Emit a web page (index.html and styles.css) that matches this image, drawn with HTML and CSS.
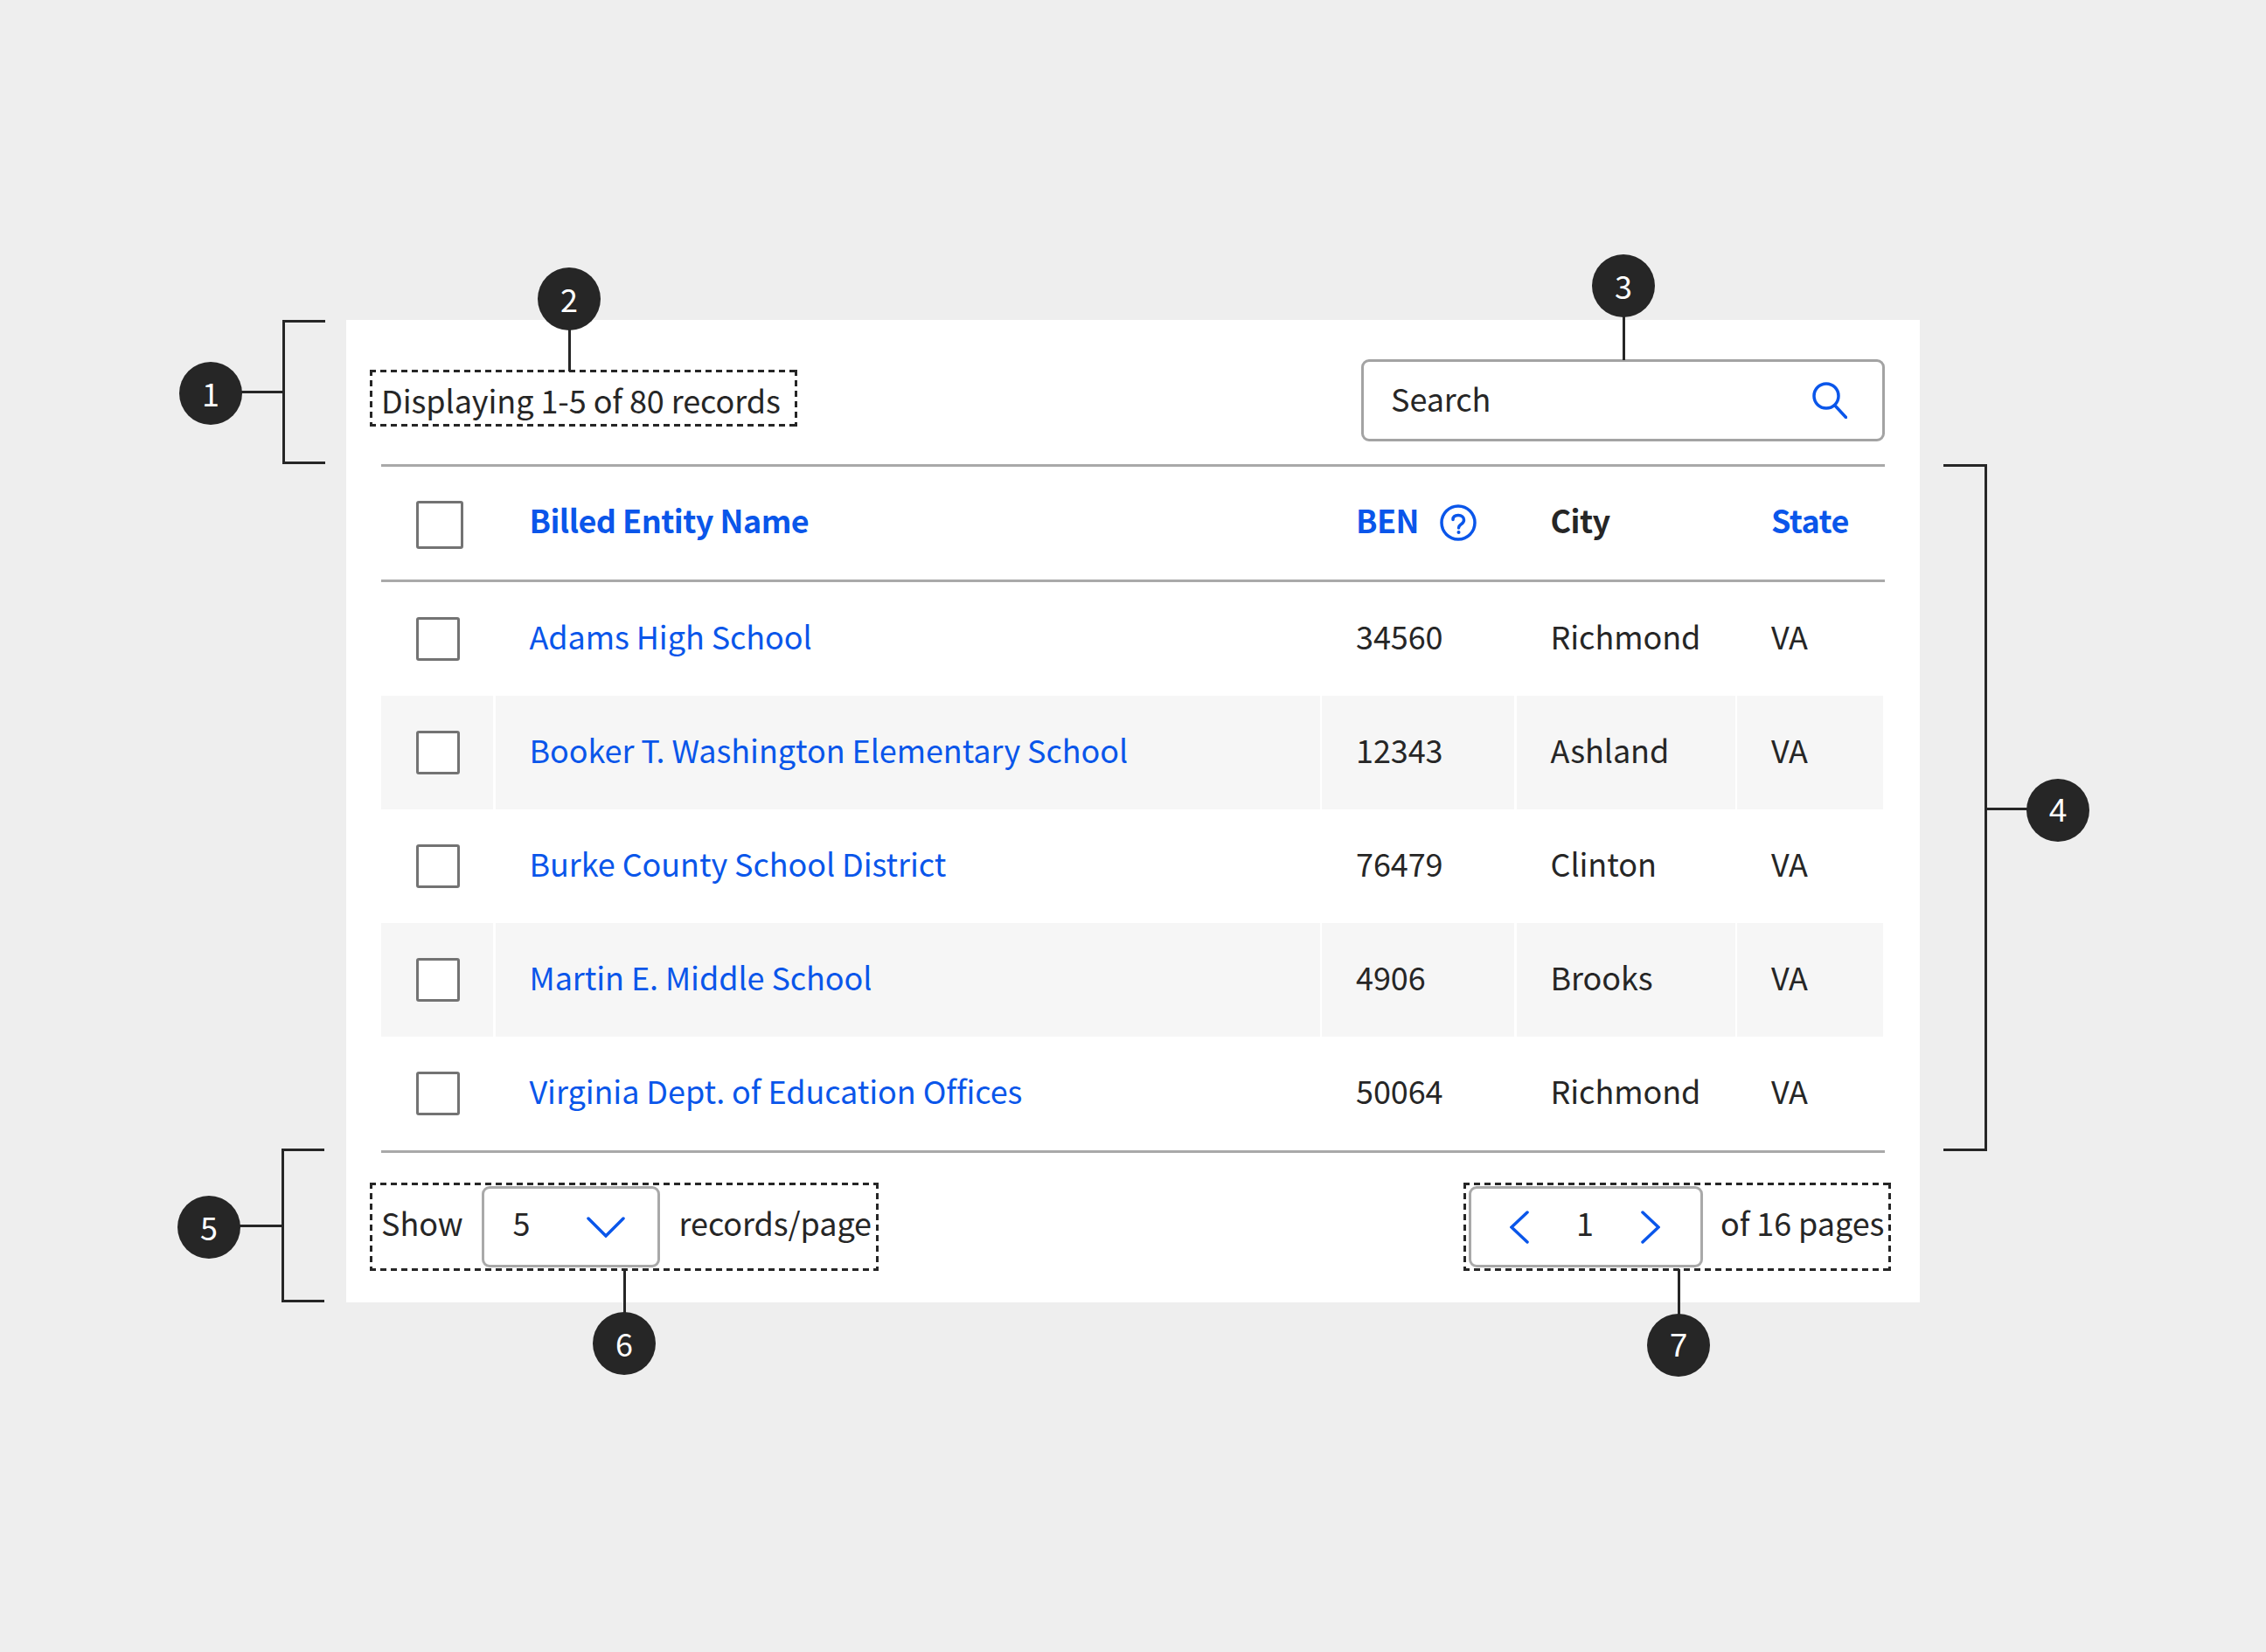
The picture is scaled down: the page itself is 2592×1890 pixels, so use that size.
FILE: index.html
```html
<!DOCTYPE html>
<html lang="en">
<head>
<meta charset="utf-8">
<title>Data table anatomy</title>
<link rel="stylesheet" href="styles.css">
</head>
<body>
<main class="stage">
  <section class="card">
    <header class="toolbar">
      <div class="dashed count">Displaying 1-5 of 80 records</div>
      <div class="search">
        <span class="search-label">Search</span>
        <svg class="search-icon" viewBox="0 0 40 42" fill="none"><circle cx="16" cy="16" r="14"/><path d="M26 27 38.500 40.500"/></svg>
      </div>
    </header>
    <div class="table">
      <div class="row head">
        <div class="cell"><span class="check large"></span></div>
        <div class="cell link strong">Billed Entity Name</div>
        <div class="cell link strong">BEN
          <svg class="help" viewBox="0 0 42 42" fill="none"><circle cx="21" cy="21" r="19"/><path d="M15 17.500C15 14 17.500 12.500 21 12.500C25 12.500 27.500 15 27.500 18C27.500 21 25.500 22 23.500 23.500C22 24.500 21.500 25.500 21.500 27"/><circle class="help-dot" cx="21.500" cy="32" r="2"/></svg>
        </div>
        <div class="cell strong">City</div>
        <div class="cell link strong">State</div>
      </div>
      <div class="row">
        <div class="cell"><span class="check"></span></div>
        <div class="cell link">Adams High School</div>
        <div class="cell">34560</div><div class="cell">Richmond</div><div class="cell">VA</div>
      </div>
      <div class="row band">
        <div class="cell"><span class="check"></span></div>
        <div class="cell link">Booker T. Washington Elementary School</div>
        <div class="cell">12343</div><div class="cell">Ashland</div><div class="cell">VA</div>
      </div>
      <div class="row">
        <div class="cell"><span class="check"></span></div>
        <div class="cell link">Burke County School District</div>
        <div class="cell">76479</div><div class="cell">Clinton</div><div class="cell">VA</div>
      </div>
      <div class="row band">
        <div class="cell"><span class="check"></span></div>
        <div class="cell link">Martin E. Middle School</div>
        <div class="cell">4906</div><div class="cell">Brooks</div><div class="cell">VA</div>
      </div>
      <div class="row">
        <div class="cell"><span class="check"></span></div>
        <div class="cell link">Virginia Dept. of Education Offices</div>
        <div class="cell">50064</div><div class="cell">Richmond</div><div class="cell">VA</div>
      </div>
    </div>
    <footer class="pager">
      <div class="dashed page-size">
        <span class="t">Show</span>
        <div class="box select">
          <span class="t">5</span>
          <svg class="chev-down" viewBox="0 0 44 24" fill="none"><path d="M2 2 22 22 42 2"/></svg>
        </div>
        <span class="t">records/page</span>
      </div>
      <div class="dashed page-nav">
        <div class="box stepper">
          <svg class="chev-side" viewBox="0 0 22 38" fill="none"><path d="M20 2 2 19 20 36"/></svg>
          <span class="t">1</span>
          <svg class="chev-side" viewBox="0 0 22 38" fill="none"><path d="M2 2 20 19 2 36"/></svg>
        </div>
        <span class="t">of 16 pages</span>
      </div>
    </footer>
  </section>

  <div class="bracket left b-toolbar"></div>
  <div class="bracket right b-table"></div>
  <div class="bracket left b-footer"></div>
  <div class="wire h w1"></div>
  <div class="wire v w2"></div>
  <div class="wire v w3"></div>
  <div class="wire h w4"></div>
  <div class="wire h w5"></div>
  <div class="wire v w6"></div>
  <div class="wire v w7"></div>
  <div class="badge n1">1</div>
  <div class="badge n2">2</div>
  <div class="badge n3">3</div>
  <div class="badge n4">4</div>
  <div class="badge n5">5</div>
  <div class="badge n6">6</div>
  <div class="badge n7">7</div>
</main>
</body>
</html>
```
FILE: styles.css
```css
* { box-sizing: border-box; }
html, body { margin: 0; height: 1890px; overflow: hidden; }
body {
  background: #eeeeee;
  color: #262626;
  font-family: "Noto Sans CJK SC", "Source Sans Pro", "Noto Sans", sans-serif;
  font-size: 36px;
  line-height: 44px;
  letter-spacing: -0.08px;
}
.stage { position: relative; width: 2592px; height: 1890px; padding: 366px 0 0 396px; }
.card { width: 1800px; height: 1124px; background: #fff; display: flex; flex-direction: column; }

.toolbar { height: 165px; padding: 45px 40px 0 27px; display: flex; justify-content: space-between; align-items: flex-start; }
.dashed {
  border: 3px solid transparent;
  display: flex;
  align-items: center;
  flex: none;
  white-space: nowrap;
  background-origin: border-box;
  background-repeat: no-repeat;
  background-image:
    repeating-linear-gradient(90deg, #262626 0 7px, transparent 7px 12px),
    repeating-linear-gradient(90deg, #262626 0 7px, transparent 7px 12px),
    repeating-linear-gradient(180deg, #262626 0 7px, transparent 7px 12px),
    repeating-linear-gradient(180deg, #262626 0 7px, transparent 7px 12px);
  background-size: 100% 3px, 100% 3px, 3px 100%, 3px 100%;
  background-position: left top, left bottom, left top, right top;
}
.count { margin-top: 12px; width: 489px; height: 65px; padding: 2px 0 0 10px; }
.search { width: 599px; height: 94px; border: 3px solid #a3a3a3; border-radius: 9px; display: flex; align-items: center; justify-content: space-between; padding: 0 40px 0 31px; }
.search-label { margin-bottom: 7px; }
.search-icon { width: 40px; height: 42px; stroke: #0a56ea; stroke-width: 3.5; stroke-linecap: round; }

.table { margin: 0 40px; border-top: 3px solid #a9a9a9; border-bottom: 3px solid #a9a9a9; }
.row { display: grid; grid-template-columns: 128px 943px 220px 250px 1fr; column-gap: 2.5px; height: 130px; margin-right: 2px; }
.row.head { height: 132px; border-bottom: 3px solid #a9a9a9; margin-right: 0; }
.band .cell { background: #f6f6f6; }
.cell { display: flex; align-items: center; padding: 0 0 9px 39px; white-space: nowrap; }
.row .cell:first-child { padding: 0 0 0 40px; }
.link { color: #0a56ea; }
.strong { font-weight: 600; letter-spacing: -0.55px; padding-bottom: 9px; }
.check { width: 50px; height: 50px; background: #fff; border: 3px solid #737373; border-radius: 3px; }
.check.large { width: 54px; height: 55px; margin-top: 4px; }
.help { width: 42px; height: 42px; margin: 8px 0 0 24px; flex: none; stroke: #0a56ea; stroke-width: 3.5; stroke-linecap: round; }
.help-dot { fill: #0a56ea; stroke: none; }

.pager { padding: 34px 33px 0 27px; display: flex; justify-content: space-between; align-items: flex-start; }
.page-size, .page-nav { height: 101px; }
.page-size { width: 582px; padding-left: 10px; }
.page-nav { width: 489px; padding-left: 3px; }
.t { margin-bottom: 11px; }
.box { height: 93px; background: #fff; border: 3px solid #a9a9a9; border-radius: 9px; display: flex; align-items: center; flex: none; }
.select { width: 204px; margin: 0 22px 0 21px; padding: 0 37px 0 33px; justify-content: space-between; }
.chev-down { width: 44px; height: 24px; stroke: #0a56ea; stroke-width: 3.5; stroke-linecap: round; }
.stepper { width: 268px; margin-right: 20px; padding: 0 46px 0 44px; justify-content: space-between; }
.chev-side { width: 22px; height: 38px; stroke: #0a56ea; stroke-width: 3.5; stroke-linecap: round; }

/* annotation overlay */
.bracket { position: absolute; border: 3px solid #262626; }
.bracket.left { border-right: 0; }
.bracket.right { border-left: 0; }
.b-toolbar { left: 323px; top: 366px; width: 49px; height: 165px; }
.b-table { left: 2223px; top: 531px; width: 50px; height: 786px; }
.b-footer { left: 322px; top: 1314px; width: 49px; height: 176px; }
.wire { position: absolute; background: #262626; }
.wire.h { height: 3px; }
.wire.v { width: 3px; }
.w1 { left: 275px; top: 447px; width: 50px; }
.w2 { left: 650px; top: 375px; height: 50px; }
.w3 { left: 1856px; top: 360px; height: 52px; }
.w4 { left: 2271px; top: 924px; width: 50px; }
.w5 { left: 273px; top: 1401px; width: 50px; }
.w6 { left: 713px; top: 1452px; height: 52px; }
.w7 { left: 1919px; top: 1452px; height: 52px; }
.badge { position: absolute; width: 72px; height: 72px; padding-bottom: 3px; border-radius: 50%; background: #262626; color: #fff; display: flex; align-items: center; justify-content: center; font-size: 36px; line-height: 1; }
.n1 { left: 205px; top: 414px; }
.n2 { left: 615px; top: 306px; }
.n3 { left: 1821px; top: 291px; }
.n4 { left: 2318px; top: 891px; padding-bottom: 0; font-family: "Liberation Sans", Arial, sans-serif; font-size: 37px; }
.n5 { left: 203px; top: 1368px; }
.n6 { left: 678px; top: 1501px; }
.n7 { left: 1884px; top: 1503px; padding-bottom: 0; font-family: "Liberation Sans", Arial, sans-serif; font-size: 37px; }
```
